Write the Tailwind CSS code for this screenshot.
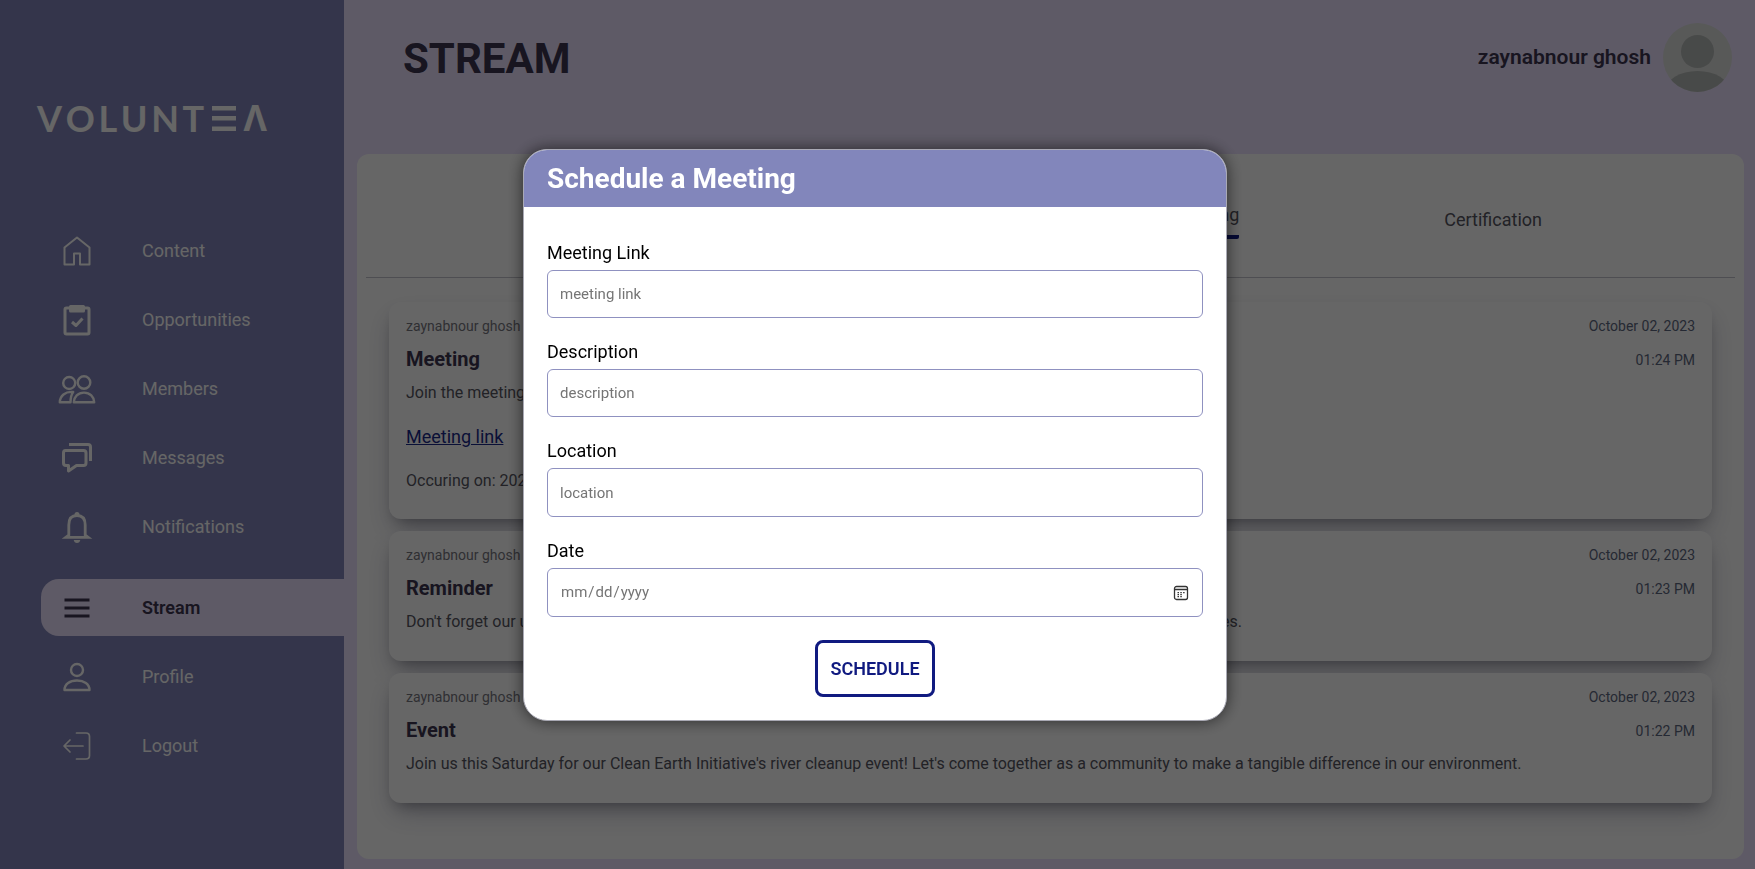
<!DOCTYPE html>
<html lang="en">
<head>
<meta charset="utf-8">
<meta name="viewport" content="width=device-width, initial-scale=1">
<title>Stream</title>
<script src="https://cdn.jsdelivr.net/npm/@tailwindcss/browser@4"></script>
</head>
<body class="min-h-screen bg-[#ebe1ff] font-['Roboto',sans-serif] text-[#3c3550]">
<div class="flex min-h-screen">

  <aside class="w-[344px] shrink-0 bg-[#8286bb] text-white">
    <a href="#" aria-label="Voluntea" class="mx-[37px] mt-[100px] flex h-9 w-[230px] items-center justify-between font-['Lato',sans-serif] text-[36px] leading-9 font-bold">
      <span>V</span><span>O</span><span>L</span><span>U</span><span>N</span><span>T</span>
      <svg class="mx-1 h-[26px] w-6" viewBox="0 0 24 26" fill="currentColor" aria-hidden="true"><path d="M0 1h24v4.600H0zM0 11h24v4.600H0zM0 21.400h24v4.600H0z"/></svg>
      <span class="font-['Open_Sans',sans-serif]">Λ</span>
    </a>

    <nav class="mt-[86px] flex flex-col gap-3 pl-[41px] text-[18px]">
      <a href="#" class="flex h-[57px] items-center pl-[18px]">
        <svg class="h-9 w-9" viewBox="0 0 36 36" fill="none" stroke="currentColor" stroke-width="2" stroke-linejoin="round"><path d="M18 4.500 5.500 14.500V31.500h9.500v-11h6v11h9.500v-17z"/></svg>
        <span class="ml-[47px]">Content</span></a>
      <a href="#" class="flex h-[57px] items-center pl-[18px]">
        <svg class="h-9 w-9" viewBox="0 0 36 36" fill="none" stroke="currentColor" stroke-width="3" stroke-linejoin="round"><rect x="6" y="6" width="24" height="26" rx="1.500"/><path d="M11.500 4.500h13v4.500h-13z" fill="currentColor"/><path d="m13 20 4 3.500 6.500-7"/></svg>
        <span class="ml-[47px]">Opportunities</span></a>
      <a href="#" class="flex h-[57px] items-center pl-[18px]">
        <svg class="h-9 w-9 overflow-visible" viewBox="0 0 36 36" fill="none" stroke="currentColor" stroke-width="2.400" stroke-linejoin="round"><circle cx="10.200" cy="12" r="6"/><circle cx="25" cy="11.500" r="6.300"/><path d="M14.800 31.300C15 26 19 21.600 25 21.600S35 26 35.200 31.300zM14.200 21C6 20.200 1 25 .8 31.300h10.700c0-4.500 1-8 2.700-10.300z"/></svg>
        <span class="ml-[47px]">Members</span></a>
      <a href="#" class="flex h-[57px] items-center pl-[18px]">
        <svg class="h-9 w-9" viewBox="0 0 36 36" fill="none" stroke="currentColor" stroke-width="3" stroke-linejoin="round"><path d="M6.500 10.500h18q2.500 0 2.500 2.500v10q0 2.500-2.500 2.500h-7L9.500 31v-5.500H7q-2.500 0-2.500-2.500V13q0-2.500 2-2.500z"/><path d="M10 4.500h19q2.500 0 2.500 2.500v14"/></svg>
        <span class="ml-[47px]">Messages</span></a>
      <a href="#" class="flex h-[57px] items-center pl-[18px]">
        <svg class="h-9 w-9" viewBox="0 0 36 36"><path d="M9.800 26V16q0-9.500 8.200-9.500t8.200 9.500v10l3 2.300H6.800z" fill="none" stroke="currentColor" stroke-width="2.800"/><path fill="currentColor" d="M15.500 7V5.500q0-2.500 2.500-2.500t2.500 2.500V7zM14.700 31h6.600q-.6 3-3.300 3t-3.300-3z"/></svg>
        <span class="ml-[47px]">Notifications</span></a>
      <a href="#" aria-current="page" class="mt-3 flex h-[57px] items-center rounded-l-[18px] bg-[#ebe1ff] pl-[18px] font-semibold text-[#3c3550]">
        <svg class="h-9 w-9" viewBox="0 0 36 36" fill="currentColor"><path d="M5.500 8.500h25v3h-25zM5.500 16.500h25v3h-25zM5.500 24.500h25v3h-25z"/></svg>
        <span class="ml-[47px]">Stream</span></a>
      <a href="#" class="flex h-[57px] items-center pl-[18px]">
        <svg class="h-9 w-9" viewBox="0 0 36 36" fill="none" stroke="currentColor" stroke-width="2.400" stroke-linejoin="round"><circle cx="18" cy="11" r="6"/><path d="M5.500 31C5.500 25 11 21.500 18 21.500S30.500 25 30.500 31z"/></svg>
        <span class="ml-[47px]">Profile</span></a>
      <a href="#" class="flex h-[57px] items-center pl-[18px]">
        <svg class="h-9 w-9" viewBox="0 0 36 36" fill="none" stroke="currentColor" stroke-width="1.700" stroke-linecap="round" stroke-linejoin="round"><path d="M17.500 5h9.500q3.500 0 3.500 3.500v19q0 3.500-3.500 3.500h-9.500M24 18H5.500M11 12l-6 6 6 6"/></svg>
        <span class="ml-[47px]">Logout</span></a>
    </nav>
  </aside>

  <main class="flex min-w-0 flex-1 flex-col pr-[11px] pb-[10px] pl-[13px]">
    <header class="flex h-[154px] items-start justify-between pt-[23px] pr-3 pl-[46px]">
      <h1 class="text-[42px] leading-[71px] font-bold">STREAM</h1>
      <div class="flex items-center gap-3">
        <span class="text-[21px] font-semibold">zaynabnour ghosh</span>
        <svg class="h-[69px] w-[69px] rounded-full bg-[#dcdedc]" viewBox="0 0 69 69" fill="#b4b8b6" aria-hidden="true"><circle cx="34.500" cy="28.500" r="16.500"/><ellipse cx="34.500" cy="68" rx="32" ry="20"/></svg>
      </div>
    </header>

    <section class="flex-1 rounded-xl bg-white px-[9px]">
      <div role="tablist" class="flex h-[124px] items-center justify-end gap-[205px] border-b border-[#c4c4cc] pt-2 pr-[193px] text-[18px] text-[#55555f]">
        <button role="tab" aria-selected="true" class="rounded-xs border-b-4 border-[#0f1a82] pb-[7px]">Meeting</button>
        <button role="tab">Certification</button>
      </div>

      <div class="mx-[23px] mt-6 flex flex-col gap-3">
        <article class="flex h-[217px] justify-between rounded-xl bg-white px-[17px] pt-[15px] text-[16px] text-[#55555f] shadow-[0_13px_27px_-5px_rgba(50,50,93,0.3),0_8px_16px_-8px_rgba(0,0,0,0.4)]">
          <div>
            <p class="text-[14px] leading-[18px] text-[#77777f]">zaynabnour ghosh</p>
            <h2 class="mt-3 text-[20px] leading-6 font-bold text-[#3c3550]">Meeting</h2>
            <p class="mt-[10px] leading-6">Join the meeting</p>
            <a href="#" class="mt-5 block text-[18px] leading-6 text-[#1b2a8a] underline">Meeting link</a>
            <p class="mt-5 leading-6">Occuring on: 2023</p>
          </div>
          <div class="text-right text-[14px] leading-[18px] text-[#5d6880]"><p>October 02, 2023</p><p class="mt-4">01:24 PM</p></div>
        </article>

        <article class="flex h-[130px] justify-between rounded-xl bg-white px-[17px] pt-[15px] text-[16px] text-[#55555f] shadow-[0_13px_27px_-5px_rgba(50,50,93,0.3),0_8px_16px_-8px_rgba(0,0,0,0.4)]">
          <div class="min-w-0">
            <p class="text-[14px] leading-[18px] text-[#77777f]">zaynabnour ghosh</p>
            <h2 class="mt-3 text-[20px] leading-6 font-bold text-[#3c3550]">Reminder</h2>
            <div class="mt-[10px] flex w-[836px] justify-between leading-6"><p>Don't forget our u</p><p>es.</p></div>
          </div>
          <div class="text-right text-[14px] leading-[18px] text-[#5d6880]"><p>October 02, 2023</p><p class="mt-4">01:23 PM</p></div>
        </article>

        <article class="flex h-[130px] justify-between rounded-xl bg-white px-[17px] pt-[15px] text-[16px] text-[#55555f] shadow-[0_13px_27px_-5px_rgba(50,50,93,0.3),0_8px_16px_-8px_rgba(0,0,0,0.4)]">
          <div>
            <p class="text-[14px] leading-[18px] text-[#77777f]">zaynabnour ghosh</p>
            <h2 class="mt-3 text-[20px] leading-6 font-bold text-[#3c3550]">Event</h2>
            <p class="mt-[10px] leading-6">Join us this Saturday for our Clean Earth Initiative's river cleanup event! Let's come together as a community to make a tangible difference in our environment.</p>
          </div>
          <div class="text-right text-[14px] leading-[18px] text-[#5d6880]"><p>October 02, 2023</p><p class="mt-4">01:22 PM</p></div>
        </article>
      </div>
    </section>
  </main>
</div>

<!-- Modal -->
<div class="fixed inset-0 flex items-center justify-center bg-black/60 pt-px pr-[5px]">
  <div role="dialog" aria-modal="true" aria-labelledby="dialog-title" class="w-[704px] overflow-hidden rounded-3xl border border-[#a9a9b4] bg-white text-black shadow-[0_0_16px_rgba(0,0,0,0.6)]">
    <h2 id="dialog-title" class="bg-[#8286bb] px-[23px] text-[28px] leading-[57px] font-bold text-white">Schedule a Meeting</h2>
    <form class="flex flex-col px-[23px] pt-[34px] pb-[23px] text-[18px]">
      <label for="link" class="leading-6">Meeting Link</label>
      <input id="link" type="text" placeholder="meeting link" class="mt-[5px] h-[48px] rounded-md border border-[#8f91c0] px-3 text-[15px] placeholder:text-[#757575]">
      <label for="description" class="mt-[22px] leading-6">Description</label>
      <input id="description" type="text" placeholder="description" class="mt-[5px] h-[48px] rounded-md border border-[#8f91c0] px-3 text-[15px] placeholder:text-[#757575]">
      <label for="location" class="mt-[22px] leading-6">Location</label>
      <input id="location" type="text" placeholder="location" class="mt-[5px] h-[49px] rounded-md border border-[#8f91c0] px-3 text-[15px] placeholder:text-[#757575]">
      <label for="date" class="mt-[22px] leading-6">Date</label>
      <div class="relative mt-[5px]">
        <input id="date" type="date" class="h-[49px] w-full rounded-md border border-[#8f91c0] px-3 text-[15px] text-[#757575] [&::-webkit-calendar-picker-indicator]:opacity-0">
        <svg class="pointer-events-none absolute top-[17px] right-[14px] h-4 w-4" viewBox="0 0 16 16" fill="none" stroke="#333" aria-hidden="true"><rect x="1.500" y="1.500" width="13" height="13" rx="2" stroke-width="1.300"/><path d="M1.500 4.500h13" stroke-width="1.300"/><path d="M4.500 7.700H6m1.300 0h1.500m1.300 0h1.500M4.500 9.700H6m1.300 0h1.500M4.500 11.700H6m1.300 0h1.500" stroke-width="1.300"/></svg>
      </div>
      <button type="submit" class="mt-[23px] h-[57px] self-center rounded-lg border-3 border-[#101a80] px-3 text-[18px] font-semibold text-[#101a80]">SCHEDULE</button>
    </form>
  </div>
</div>
</body>
</html>
